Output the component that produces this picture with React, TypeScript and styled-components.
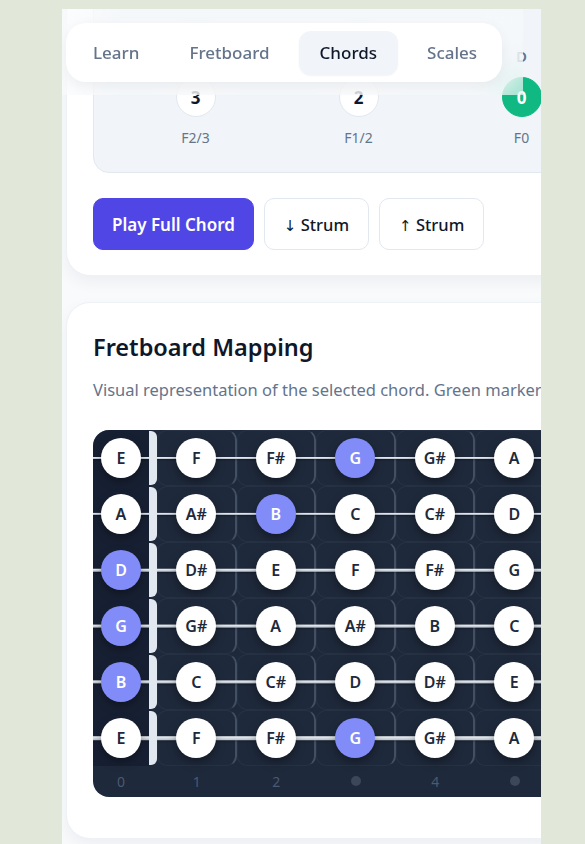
import React from "react";
import styled, { createGlobalStyle, css } from "styled-components";

const Global = createGlobalStyle`
  html, body { margin: 0; padding: 0; }
  body {
    background: #e1e7d9;
    font-family: "Noto Sans", "Open Sans", "Liberation Sans", sans-serif;
    color: #0f172a;
    overflow: hidden;
  }
  * { box-sizing: border-box; }
`;

const Page = styled.div`
  padding: 9px 0 0 62px;
  height: 844px;
`;

const Column = styled.div`
  position: relative;
  width: 479px;
  height: 835px;
  overflow: hidden;
  background: #f8fafc;
`;

const Header = styled.header`
  position: absolute;
  top: 0;
  left: 0;
  width: 461px;
  height: 86px;
  z-index: 10;
  padding: 14px 0 0 4px;
  background: rgba(248, 250, 252, 0.6);
  backdrop-filter: blur(16px);
  -webkit-backdrop-filter: blur(16px);
`;

const Pill = styled.nav`
  width: 436px;
  height: 59px;
  background: #ffffff;
  border-radius: 20px;
  box-shadow: 0 4px 14px rgba(15, 23, 42, 0.06);
  display: flex;
  align-items: center;
  gap: 8px;
  padding: 0 6px;
`;

const Tab = styled.button<{ $active?: boolean }>`
  height: 44px;
  padding: 0 21px;
  border: none;
  border-radius: 12px;
  background: transparent;
  font-family: inherit;
  font-size: 17px;
  font-weight: 500;
  color: #64748b;
  cursor: pointer;
  ${(p) =>
    p.$active &&
    css`
      background: #f1f5f9;
      color: #0f172a;
      box-shadow: 0 1px 2px rgba(15, 23, 42, 0.05);
    `}
`;

/* simulated scroll position of the page */
const Content = styled.main`
  margin-top: -57px;
  padding-left: 4px;
  display: flex;
  flex-direction: column;
  gap: 26px;
`;

const Card = styled.section<{ $pt?: number; $pb?: number }>`
  width: 560px;
  background: #ffffff;
  border: 1px solid #eef1f5;
  border-radius: 24px;
  box-shadow: 0 6px 16px rgba(15, 23, 42, 0.05);
  padding: ${(p) => p.$pt ?? 26}px 26px ${(p) => p.$pb ?? 25}px;
`;

const StringBox = styled.div`
  background: #f1f5f9;
  border: 1px solid #e2e8f0;
  border-radius: 16px;
  padding: 66px 20px 24px;
  display: grid;
  grid-template-columns: repeat(6, 163px);
`;

const StringItem = styled.div`
  display: flex;
  flex-direction: column;
  align-items: center;
`;

const StringName = styled.div`
  font-size: 15px;
  line-height: 20px;
  font-weight: 600;
  color: #64748b;
  margin-bottom: 11px;
`;

const FretBubble = styled.div<{ $open?: boolean }>`
  width: 40px;
  height: 40px;
  border-radius: 50%;
  display: flex;
  align-items: center;
  justify-content: center;
  font-size: 17px;
  font-weight: 700;
  background: ${(p) => (p.$open ? "#10b981" : "#ffffff")};
  color: ${(p) => (p.$open ? "#ffffff" : "#0f172a")};
  border: 1px solid ${(p) => (p.$open ? "#10b981" : "#e2e8f0")};
  margin-bottom: 11px;
`;

const FingerLabel = styled.div`
  font-size: 14px;
  line-height: 20px;
  color: #64748b;
`;

const Actions = styled.div`
  display: flex;
  gap: 10px;
  margin-top: 25px;
`;

const Button = styled.button<{ $primary?: boolean }>`
  height: 52px;
  border-radius: 10px;
  font-family: inherit;
  cursor: pointer;
  ${(p) =>
    p.$primary
      ? css`
          padding: 0 18px;
          font-size: 17px;
          background: #4f46e5;
          color: #ffffff;
          border: 1px solid #4f46e5;
          font-weight: 600;
        `
      : css`
          padding: 0 19px;
          font-size: 16.5px;
          background: #ffffff;
          color: #0f172a;
          border: 1px solid #e2e8f0;
          font-weight: 500;
        `}
`;

const Arrow = styled.span`
  font-family: "DejaVu Sans", "Liberation Sans", sans-serif;
  color: #0f172a;
  font-size: 15px;
`;

const Title = styled.h2`
  margin: 0;
  font-size: 23.5px;
  line-height: 36px;
  font-weight: 600;
  color: #0f172a;
`;

const Description = styled.p`
  margin: 13px 0 0;
  font-size: 16.5px;
  line-height: 24px;
  color: #64748b;
  white-space: nowrap;
`;

const Board = styled.div`
  margin-top: 28px;
  width: 520px;
  background: #1e293b;
  border-radius: 16px;
  overflow: hidden;
`;

const COLS = "56px 8px repeat(6, 79.5px)";

const Row = styled.div`
  position: relative;
  display: grid;
  grid-template-columns: ${COLS};
  height: 56px;
`;

const StringLine = styled.div<{ $w: number }>`
  position: absolute;
  left: 0;
  right: 0;
  top: 50%;
  height: ${(p) => p.$w}px;
  transform: translateY(-50%);
  background: linear-gradient(to bottom, #f1f5f9, #b6bcc6);
  box-shadow: 0 1px 2px rgba(0, 0, 0, 0.35);
  z-index: 1;
`;

const OpenCell = styled.div`
  background: rgba(15, 23, 42, 0.45);
  display: flex;
  align-items: center;
  justify-content: center;
`;

const Nut = styled.div`
  background: #e2e8f0;
  border-radius: 0 6px 6px 0;
  margin: 1px 0;
  position: relative;
  z-index: 3;
`;

const FretCell = styled.div`
  display: flex;
  align-items: center;
  justify-content: center;
  border: 1px solid rgba(148, 163, 184, 0.08);
  border-right: 2px solid rgba(148, 163, 184, 0.32);
  border-radius: 10px;
`;

const Note = styled.div<{ $hl?: boolean }>`
  position: relative;
  z-index: 2;
  width: 40px;
  height: 40px;
  border-radius: 50%;
  display: flex;
  align-items: center;
  justify-content: center;
  font-size: 16px;
  font-weight: 600;
  background: ${(p) => (p.$hl ? "#818cf8" : "#ffffff")};
  color: ${(p) => (p.$hl ? "#ffffff" : "#1e293b")};
  box-shadow: 0 4px 10px rgba(0, 0, 0, 0.35);
`;

const NumberRow = styled.div`
  display: grid;
  grid-template-columns: ${COLS};
  height: 31px;
  align-items: center;
  padding-bottom: 1px;
`;

const FretNum = styled.div`
  text-align: center;
  font-size: 14px;
  color: #4b5a70;
`;

const Dot = styled.div`
  width: 10px;
  height: 10px;
  border-radius: 50%;
  background: #3c4759;
  margin: 0 auto;
`;

const strings = [
  { notes: ["E", "F", "F#", "G", "G#", "A", "A#"], hl: 3, w: 2 },
  { notes: ["A", "A#", "B", "C", "C#", "D", "D#"], hl: 2, w: 2.2 },
  { notes: ["D", "D#", "E", "F", "F#", "G", "G#"], hl: 0, w: 2.5 },
  { notes: ["G", "G#", "A", "A#", "B", "C", "C#"], hl: 0, w: 2.8 },
  { notes: ["B", "C", "C#", "D", "D#", "E", "F"], hl: 0, w: 3.2 },
  { notes: ["E", "F", "F#", "G", "G#", "A", "A#"], hl: 3, w: 3.5 },
];

const chordStrings = [
  { name: "E", fret: "3", finger: "F2/3" },
  { name: "A", fret: "2", finger: "F1/2" },
  { name: "D", fret: "0", finger: "F0" },
  { name: "G", fret: "0", finger: "F0" },
  { name: "B", fret: "0", finger: "F0" },
  { name: "E", fret: "3", finger: "F3/4" },
];

const fretMarks: (string | null)[] = ["0", null, "1", "2", "dot", "4", "dot", "6"];

export default function App() {
  return (
    <Page>
      <Global />
      <Column>
        <Header>
          <Pill>
            <Tab>Learn</Tab>
            <Tab>Fretboard</Tab>
            <Tab $active>Chords</Tab>
            <Tab>Scales</Tab>
          </Pill>
        </Header>
        <Content>
          <Card>
            <StringBox>
              {chordStrings.map((s, i) => (
                <StringItem key={i}>
                  <StringName>{s.name}</StringName>
                  <FretBubble $open={s.fret === "0"}>{s.fret}</FretBubble>
                  <FingerLabel>{s.finger}</FingerLabel>
                </StringItem>
              ))}
            </StringBox>
            <Actions>
              <Button $primary>Play Full Chord</Button>
              <Button>
                <Arrow>↓</Arrow> Strum
              </Button>
              <Button>
                <Arrow>↑</Arrow> Strum
              </Button>
            </Actions>
          </Card>
          <Card $pt={26} $pb={41}>
            <Title>Fretboard Mapping</Title>
            <Description>
              Visual representation of the selected chord. Green markers show open strings.
            </Description>
            <Board>
              {strings.map((s, r) => (
                <Row key={r}>
                  <StringLine $w={s.w} />
                  <OpenCell>
                    <Note $hl={s.hl === 0}>{s.notes[0]}</Note>
                  </OpenCell>
                  <Nut />
                  {s.notes.slice(1).map((n, f) => (
                    <FretCell key={f}>
                      <Note $hl={s.hl === f + 1}>{n}</Note>
                    </FretCell>
                  ))}
                </Row>
              ))}
              <NumberRow>
                {fretMarks.map((m, i) =>
                  m === null ? (
                    <div key={i} />
                  ) : m === "dot" ? (
                    <div key={i}>
                      <Dot />
                    </div>
                  ) : (
                    <FretNum key={i}>{m}</FretNum>
                  )
                )}
              </NumberRow>
            </Board>
          </Card>
        </Content>
      </Column>
    </Page>
  );
}
